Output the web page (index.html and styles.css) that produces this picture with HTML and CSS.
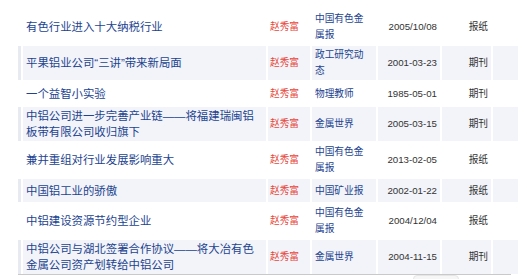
FILE: index.html
```html
<!DOCTYPE html>
<html lang="zh">
<head>
<meta charset="utf-8">
<link rel="stylesheet" href="styles.css">
</head>
<body>
<div class="wrap">
<table class="list">
<colgroup>
<col class="c-strip"><col class="c-title"><col class="c-author"><col class="c-src"><col class="c-date"><col class="c-type"><col class="c-end">
</colgroup>
<tbody>
<tr><td class="strip"></td><td class="title">有色行业进入十大纳税行业</td><td class="author">赵秀富</td><td class="src">中国有色金属报</td><td class="date">2005/10/08</td><td class="type">报纸</td><td></td></tr>
<tr class="alt"><td class="strip"></td><td class="title">平果铝业公司“三讲”带来新局面</td><td class="author">赵秀富</td><td class="src">政工研究动态</td><td class="date">2001-03-23</td><td class="type">期刊</td><td></td></tr>
<tr><td class="strip"></td><td class="title">一个益智小实验</td><td class="author">赵秀富</td><td class="src">物理教师</td><td class="date">1985-05-01</td><td class="type">期刊</td><td></td></tr>
<tr class="alt"><td class="strip"></td><td class="title">中铝公司进一步完善产业链——将福建瑞闽铝板带有限公司收归旗下</td><td class="author">赵秀富</td><td class="src">金属世界</td><td class="date">2005-03-15</td><td class="type">期刊</td><td></td></tr>
<tr><td class="strip"></td><td class="title">兼并重组对行业发展影响重大</td><td class="author">赵秀富</td><td class="src">中国有色金属报</td><td class="date">2013-02-05</td><td class="type">报纸</td><td></td></tr>
<tr class="alt"><td class="strip"></td><td class="title">中国铝工业的骄傲</td><td class="author">赵秀富</td><td class="src">中国矿业报</td><td class="date">2002-01-22</td><td class="type">报纸</td><td></td></tr>
<tr><td class="strip"></td><td class="title">中铝建设资源节约型企业</td><td class="author">赵秀富</td><td class="src">中国有色金属报</td><td class="date">2004/12/04</td><td class="type">报纸</td><td></td></tr>
<tr class="alt"><td class="strip"></td><td class="title">中铝公司与湖北签署合作协议——将大冶有色金属公司资产划转给中铝公司</td><td class="author">赵秀富</td><td class="src">金属世界</td><td class="date">2004-11-15</td><td class="type">期刊</td><td></td></tr>
</tbody>
</table>
<div class="rule"></div>
<div class="tab"></div>
</div>
</body>
</html>
```

FILE: styles.css
```css
html, body {
  margin: 0;
  padding: 0;
  background: #ffffff;
}
body {
  font-family: "Liberation Sans", "Noto Sans CJK SC", sans-serif;
  overflow: hidden;
}
.wrap {
  padding: 8px 7px 0 16px;
}
.list {
  table-layout: fixed;
  width: 504px;
  border-collapse: separate;
  border-spacing: 2px;
}
.c-strip { width: 3px; }
.c-title { width: 243px; }
.c-author { width: 42px; }
.c-src { width: 64px; }
.c-date { width: 62px; }
.c-type { width: 49px; }
.c-end { width: 25px; }

.list tr { height: 23px; }
.list td {
  padding: 1px 3px;
  line-height: 16px;
  font-size: 9.7px;
  vertical-align: middle;
  color: #333333;
}
.list td.strip { padding: 0; }
.list tr.alt td { background: #f2f4f9; }
.list tr.alt td.strip { background: #e7eaf1; }

.list td.title {
  font-size: 11.4px;
  color: #23438f;
  padding-left: 3px;
  padding-right: 3px;
}
.list td.author { color: #e8453a; padding-left: 2px; }
.list td.src { color: #23438f; }
.list td.date { text-align: right; }
.list td.type { text-align: right; }

.rule {
  height: 1px;
  background: #c9c9c9;
  margin: -2px 9px 0 2px;
}
.tab {
  width: 44px;
  height: 8px;
  margin: 0 0 0 397px;
  background: #f6f6f6;
  border: 1px solid #e6e6e6;
  border-radius: 4px 4px 0 0;
}
```
